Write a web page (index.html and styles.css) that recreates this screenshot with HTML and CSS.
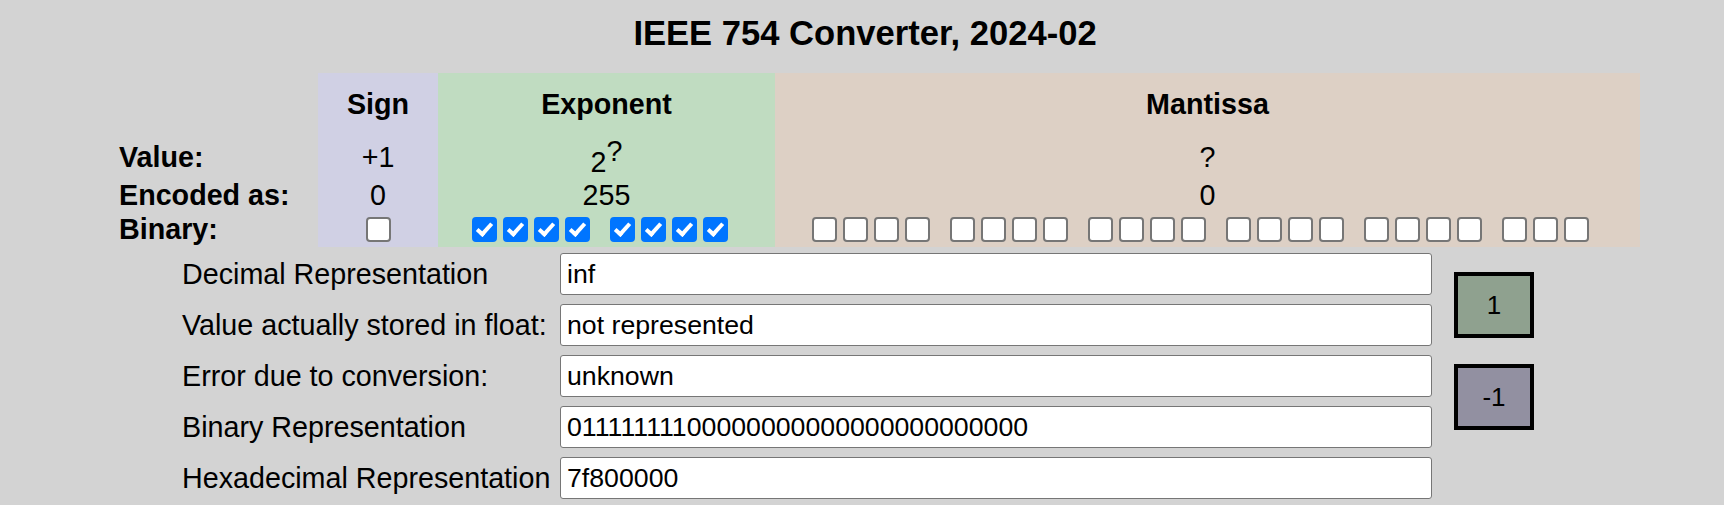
FILE: index.html
```html
<!DOCTYPE html>
<html lang="en">
<head>
<meta charset="utf-8">
<title>IEEE 754 Converter, 2024-02</title>
<link rel="stylesheet" href="styles.css">
</head>
<body>
<h1 class="title">IEEE 754 Converter, 2024-02</h1>

<div class="bits">
  <div class="cell label"></div>
  <div class="cell head c-sign">Sign</div>
  <div class="cell head c-exp">Exponent</div>
  <div class="cell head c-man">Mantissa</div>

  <div class="cell label">Value:</div>
  <div class="cell c-sign">+1</div>
  <div class="cell c-exp"><span class="pow">2<sup class="sup">?</sup></span></div>
  <div class="cell c-man">?</div>

  <div class="cell label">Encoded as:</div>
  <div class="cell c-sign">0</div>
  <div class="cell c-exp">255</div>
  <div class="cell c-man">0</div>

  <div class="cell label">Binary:</div>
  <div class="cell c-sign"><input class="bit" type="checkbox"></div>
  <div class="cell c-exp">
    <div class="groups">
      <div class="group"><input class="bit" type="checkbox" checked><input class="bit" type="checkbox" checked><input class="bit" type="checkbox" checked><input class="bit" type="checkbox" checked></div>
      <div class="group"><input class="bit" type="checkbox" checked><input class="bit" type="checkbox" checked><input class="bit" type="checkbox" checked><input class="bit" type="checkbox" checked></div>
    </div>
  </div>
  <div class="cell c-man">
    <div class="groups">
      <div class="group"><input class="bit" type="checkbox"><input class="bit" type="checkbox"><input class="bit" type="checkbox"><input class="bit" type="checkbox"></div>
      <div class="group"><input class="bit" type="checkbox"><input class="bit" type="checkbox"><input class="bit" type="checkbox"><input class="bit" type="checkbox"></div>
      <div class="group"><input class="bit" type="checkbox"><input class="bit" type="checkbox"><input class="bit" type="checkbox"><input class="bit" type="checkbox"></div>
      <div class="group"><input class="bit" type="checkbox"><input class="bit" type="checkbox"><input class="bit" type="checkbox"><input class="bit" type="checkbox"></div>
      <div class="group"><input class="bit" type="checkbox"><input class="bit" type="checkbox"><input class="bit" type="checkbox"><input class="bit" type="checkbox"></div>
      <div class="group"><input class="bit" type="checkbox"><input class="bit" type="checkbox"><input class="bit" type="checkbox"></div>
    </div>
  </div>
</div>

<div class="fields">
  <div class="form">
    <label class="flabel">Decimal Representation</label>
    <input class="field" type="text" value="inf">
    <label class="flabel">Value actually stored in float:</label>
    <input class="field" type="text" value="not represented" readonly>
    <label class="flabel">Error due to conversion:</label>
    <input class="field" type="text" value="unknown" readonly>
    <label class="flabel">Binary Representation</label>
    <input class="field" type="text" value="01111111100000000000000000000000">
    <label class="flabel">Hexadecimal Representation</label>
    <input class="field" type="text" value="7f800000">
  </div>
  <div class="buttons">
    <button class="btn btn-plus" type="button">1</button>
    <button class="btn btn-minus" type="button">-1</button>
  </div>
</div>
</body>
</html>
```

FILE: styles.css
```css
html, body {
  margin: 0;
  padding: 0;
}

body {
  background: #d3d3d3;
  color: #000;
  font-family: "Liberation Sans", Arial, sans-serif;
  font-size: 28.7px;
}

.title {
  margin: 13px 0 20px;
  padding-left: 6px;
  font-size: 34.6px;
  font-weight: bold;
  line-height: 40px;
  text-align: center;
}

.bits {
  display: grid;
  grid-template-columns: 199px 120px 337px 865px;
  grid-template-rows: 63px 42px 34px 35px;
  margin-left: 119px;
  width: max-content;
}

.cell {
  display: flex;
  align-items: center;
  justify-content: center;
  line-height: normal;
}

.cell.label {
  justify-content: flex-start;
  font-weight: bold;
}

.cell.head {
  font-weight: bold;
}

.c-sign { background: #d0d0e4; }
.c-exp  { background: #c0dcc1; }
.c-man  { background: #ddd0c5; }

.pow {
  display: inline-block;
}

.sup {
  font-size: 28.7px;
  vertical-align: 11px;
  line-height: normal;
}

.groups {
  display: flex;
  gap: 20px;
  padding-right: 14px;
}

.group {
  display: flex;
  gap: 6px;
}

.bit {
  -webkit-appearance: none;
  appearance: none;
  position: relative;
  box-sizing: border-box;
  width: 25px;
  height: 25px;
  margin: 0;
  border: 2px solid #767676;
  border-radius: 4px;
  background: #fff;
}

.bit:checked {
  border-color: #0075ff;
  background: #0075ff;
}

.bit:checked::after {
  content: "";
  position: absolute;
  left: 6px;
  top: 1px;
  width: 5px;
  height: 12px;
  border: solid #fff;
  border-width: 0 4px 4px 0;
  transform: rotate(42deg);
}

.fields {
  display: flex;
  align-items: flex-start;
  margin: 6px 0 0 182px;
}

.form {
  display: grid;
  grid-template-columns: 378px 872px;
  grid-auto-rows: 42px;
  row-gap: 9px;
}

.flabel {
  align-self: center;
  font-size: 28.7px;
  white-space: nowrap;
}

.field {
  box-sizing: border-box;
  width: 872px;
  height: 42px;
  margin: 0;
  padding: 0 6px;
  border: 1px solid #767676;
  border-radius: 3px;
  background: #fff;
  color: #000;
  font-family: "Liberation Sans", Arial, sans-serif;
  font-size: 26.7px;
}

.buttons {
  display: flex;
  flex-direction: column;
  gap: 26px;
  margin-left: 22px;
  padding-top: 19px;
}

.btn {
  box-sizing: border-box;
  width: 80px;
  height: 66px;
  margin: 0;
  padding: 0;
  border: 4px solid #000;
  border-radius: 0;
  color: #000;
  font-family: "Liberation Sans", Arial, sans-serif;
  font-size: 26px;
}

.btn-plus  { background: #8fa18f; }
.btn-minus { background: #9290a1; }
```
